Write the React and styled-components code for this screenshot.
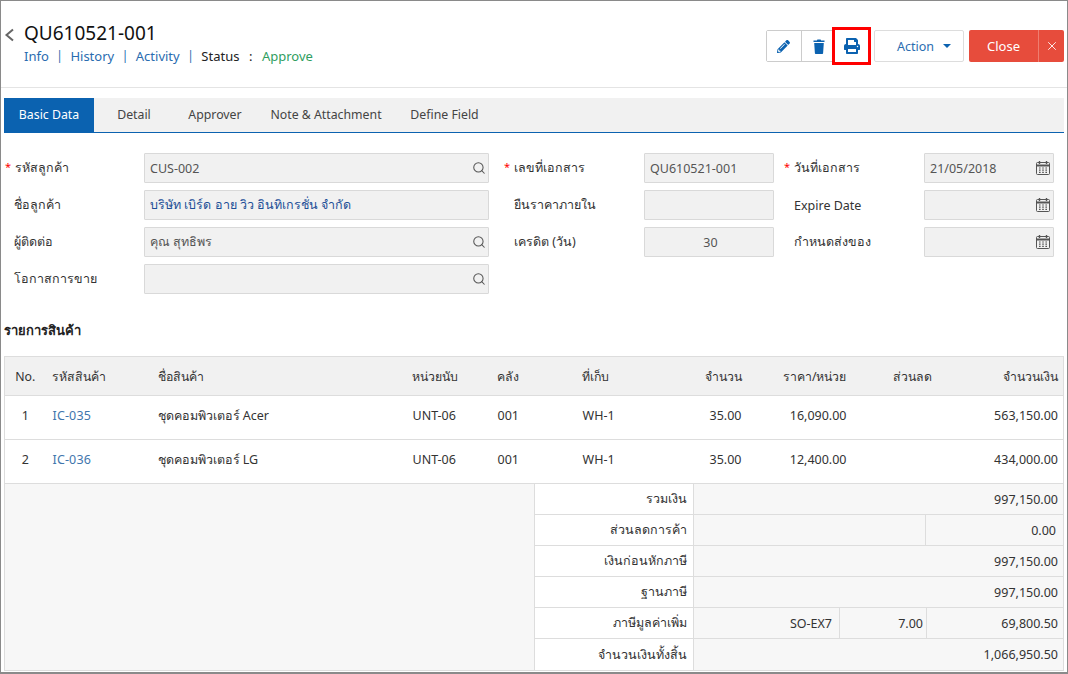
import React from "react";
import styled, { createGlobalStyle } from "styled-components";
import { FaPencilAlt, FaPrint } from "react-icons/fa";
import { Search, X } from "lucide-react";

const Global = createGlobalStyle`
  * { box-sizing: border-box; }
  html, body { margin: 0; padding: 0; background: #fff; }
  body { font-family: "Noto Sans", "Open Sans", "Liberation Sans", sans-serif; font-size: 12.5px; color: #333; }
`;

const Frame = styled.div`
  width: 1068px; height: 674px; border: 1px solid #8a8a8a; border-bottom-width: 2px; background: #fff; overflow: hidden;
  display: flex; flex-direction: column;
`;
const Header = styled.header`
  height: 87px; border-bottom: 1px solid #e4e4e4; display: flex; justify-content: space-between; padding: 21px 3px 0 2px;
`;
const TitleArea = styled.div`display: flex; align-items: flex-start;`;
const Back = styled.svg`margin: 6px 0 0 1px; width: 20px; height: 14px; flex: none;`;
const TitleText = styled.div`display: flex; flex-direction: column;`;
const Title = styled.h1`margin: 0; font-size: 19px; line-height: 23px; font-weight: 400; color: #111;`;
const SubNav = styled.nav`display: flex; align-items: center; font-size: 13px; line-height: 22px;`;
const NavLink = styled.a`color: #2a6cb0;`;
const Sep = styled.span`color: #2a6cb0; margin: 0 7.5px; font-size: 12px;`;
const Status = styled.span`color: #222;`;
const Colon = styled.span`color: #222; margin: 0 9.5px;`;
const Approve = styled.span`color: #2f9e5f;`;

const Toolbar = styled.div`display: flex; align-items: flex-start; margin-top: 8px;`;
const IconGroup = styled.div`display: flex; height: 32px; border: 1px solid #ccc; border-radius: 2px;`;
const IconButton = styled.button`
  width: 34px; height: 30px; padding: 0 ${p => p.$nudge ?? 0}px 0 0; background: #fff; border: 0; color: #0b62b0; font-size: 13px;
  display: flex; align-items: center; justify-content: center;
  border-left: ${p => (p.$first ? "0" : "1px solid #ccc")};
  ${p => p.$marked && "outline: 3px solid #f00; position: relative; height: 32px; margin-top: -1px; width: 33px; font-size: 16px;"}
`;
const ActionButton = styled.button`
  width: 90px; height: 32px; margin-left: 5px; background: #fff; border: 1px solid #ddd; border-radius: 2px; color: #2a6cb0;
  font: inherit; display: flex; align-items: center; justify-content: flex-end; padding: 0 12px 0 0; gap: 9px;
`;
const Caret = styled.span`width: 0; height: 0; border-left: 4.5px solid transparent; border-right: 4.5px solid transparent; border-top: 4.5px solid #0b62b0;`;
const CloseGroup = styled.div`display: flex; margin-left: 5px; height: 32px; border-radius: 2px; overflow: hidden;`;
const CloseButton = styled.button`
  width: 69px; border: 0; background: #e74c3c; color: #fff; font: inherit; font-size: 13px; padding: 0;
`;
const CloseX = styled.button`
  width: 26px; border: 0; border-left: 1px solid #ee7d70; background: #e74c3c; color: #fff; padding: 0;
  display: flex; align-items: center; justify-content: center;
`;

const Tabs = styled.div`
  margin: 10px 3px 0 3px; height: 35px; background: #f1f1f1; border-bottom: 1px solid #0b62b0; display: flex;
`;
const Tab = styled.div`
  width: ${p => p.$w}px; padding-bottom: 1px; display: flex; align-items: center; justify-content: center; font-size: 12.3px; color: ${p => (p.$active ? "#fff" : "#444")};
  background: ${p => (p.$active ? "#0b62b0" : "transparent")};
`;

const Form = styled.div`
  margin-top: 20px; display: grid; grid-template-columns: 140px 345px 155px 130px 150px 130px; grid-auto-rows: 30px; row-gap: 7px; padding-left: 3px; 
`;
const Label = styled.label`
  display: flex; align-items: center; padding-left: ${p => p.$pad ?? 10}px; color: #333; font-size: 12.5px; position: relative;
`;
const Req = styled.span`color: #f00; width: 10px; flex: none; font-size: 11px; margin-top: -3px;`;
const Input = styled.div`
  border: 1px solid #d9d9d9; background: #f1f1f1; display: flex; align-items: center; justify-content: ${p => (p.$center ? "center" : "space-between")};
  padding: 0 2px 0 5px; color: ${p => p.$color || "#555"}; font-size: 12.5px; border-radius: 1px;
`;
const Spacer = styled.div``;
const Section = styled.h2`margin: 27px 0 0 3px; font-size: 13px; line-height: 18px; font-weight: 700; color: #222;`;

const Table = styled.table`
  margin: 17px 0 0 3px; width: 1059px; border-collapse: collapse; table-layout: fixed; border: 1px solid #ddd; border-bottom: 0; font-size: 12.5px;
`;
const Th = styled.th`
  height: 39px; background: #f1f1f1; font-weight: 400; font-size: 12.3px; color: #333; padding: 0 ${p => p.$pr ?? 6}px 0 6px; border-bottom: 1px solid #ddd; text-align: ${p => p.$a || "left"};
`;
const Td = styled.td`
  height: 44px; padding: 0 ${p => p.$pr ?? 6}px 4px ${p => p.$pl ?? 7}px; border-bottom: 1px solid #ddd; color: #333; text-align: ${p => p.$a || "left"};
`;
const Code = styled.span`color: #3f76ad; letter-spacing: 0.15px;`;

const Footer = styled.div`
  margin-left: 3px; width: 1060px; display: grid; grid-template-columns: 530px 1fr; border: 1px solid #ddd; border-top: 0; height: 187px;
`;
const FooterBlank = styled.div`background: #f7f7f7; border-right: 1px solid #ddd;`;
const Totals = styled.div`display: grid; grid-auto-rows: 31px;`;
const TotalRow = styled.div`display: grid; grid-template-columns: 159px 1fr; border-bottom: 1px solid #ddd; &:last-child { border-bottom: 0; }`;
const TotalLabel = styled.div`display: flex; align-items: center; justify-content: flex-end; padding-right: 6px; border-right: 1px solid #ddd; background: #fff;`;
const TotalValues = styled.div`display: flex; background: #f7f7f7;`;
const TotalCell = styled.div`
  ${p => (p.$w ? `width: ${p.$w}px;` : "flex: 1;")}
  display: flex; align-items: center; justify-content: flex-end; padding-right: ${p => p.$pr ?? 5}px;
  & + & { border-left: 1px solid #ddd; }
`;

const CalendarIcon = () => (
  <svg width="16" height="16" viewBox="0 0 16 16" fill="none" stroke="#555" strokeWidth="1">
    <rect x="1.5" y="2.5" width="13" height="12" rx="1" />
    <path d="M1.5 5.5h13" strokeWidth="2" />
    <path d="M4.5 1v3M11.5 1v3" strokeWidth="1.4" />
    <path d="M4 8h1.6M7.2 8h1.6M10.4 8h1.6M4 10.2h1.6M7.2 10.2h1.6M10.4 10.2h1.6M4 12.4h1.6M7.2 12.4h1.6M10.4 12.4h1.6" strokeWidth="1.2" />
  </svg>
);
const SearchIcon = () => <Search size={14} color="#555" strokeWidth={1.8} />;
const TrashIcon = () => (
  <svg width="12" height="15" viewBox="0 0 12 15" fill="currentColor">
    <path d="M1.2 4h9.6l-.7 10.2a.8.8 0 0 1-.8.8H2.7a.8.8 0 0 1-.8-.8z" />
    <path d="M.5 1.6h3.4l.5-1h3.2l.5 1h3.4v1.5H.5z" />
  </svg>
);

const rows = [
  ["1", "IC-035", "ชุดคอมพิวเตอร์ Acer", "16,090.00", "563,150.00"],
  ["2", "IC-036", "ชุดคอมพิวเตอร์ LG", "12,400.00", "434,000.00"],
];
const widths = [41, 106, 254, 85, 85, 84, 88, 105, 113, 98];

export default function App() {
  return (
    <Frame>
      <Global />
      <Header>
        <TitleArea>
          <Back viewBox="0 0 20 14"><path d="M9 1.5 L2.5 7 L9 12.5" fill="none" stroke="#666" strokeWidth="2" /></Back>
          <TitleText>
            <Title>QU610521-001</Title>
            <SubNav>
              <NavLink>Info</NavLink><Sep>|</Sep>
              <NavLink>History</NavLink><Sep>|</Sep>
              <NavLink>Activity</NavLink><Sep>|</Sep>
              <Status>Status</Status><Colon>:</Colon>
              <Approve>Approve</Approve>
            </SubNav>
          </TitleText>
        </TitleArea>
        <Toolbar>
          <IconGroup>
            <IconButton $first $nudge={2}><FaPencilAlt /></IconButton>
            <IconButton><TrashIcon /></IconButton>
            <IconButton $marked $first><FaPrint /></IconButton>
          </IconGroup>
          <ActionButton>Action <Caret /></ActionButton>
          <CloseGroup>
            <CloseButton>Close</CloseButton>
            <CloseX><X size={14} strokeWidth={1.5} /></CloseX>
          </CloseGroup>
        </Toolbar>
      </Header>
      <Tabs>
        <Tab $active $w={90}>Basic Data</Tab>
        <Tab $w={80}>Detail</Tab>
        <Tab $w={82}>Approver</Tab>
        <Tab $w={140}>Note &amp; Attachment</Tab>
        <Tab $w={97}>Define Field</Tab>
      </Tabs>
      <Form>
        <Label $pad={1}><Req>*</Req>รหัสลูกค้า</Label>
        <Input>CUS-002<SearchIcon /></Input>
        <Label $pad={15}><Req>*</Req>เลขที่เอกสาร</Label>
        <Input>QU610521-001</Input>
        <Label $pad={10}><Req>*</Req>วันที่เอกสาร</Label>
        <Input>21/05/2018<CalendarIcon /></Input>

        <Label>ชื่อลูกค้า</Label>
        <Input $color="#1d4f97">บริษัท เบิร์ด อาย วิว อินทิเกรชั่น จำกัด</Input>
        <Label $pad={25}>ยืนราคาภายใน</Label>
        <Input />
        <Label $pad={20}>Expire Date</Label>
        <Input><span /><CalendarIcon /></Input>

        <Label>ผู้ติดต่อ</Label>
        <Input>คุณ สุทธิพร<SearchIcon /></Input>
        <Label $pad={25}>เครดิต (วัน)</Label>
        <Input $center>30</Input>
        <Label $pad={20}>กำหนดส่งของ</Label>
        <Input><span /><CalendarIcon /></Input>

        <Label>โอกาสการขาย</Label>
        <Input><span /><SearchIcon /></Input>
        <Spacer />
      </Form>
      <Section>รายการสินค้า</Section>
      <Table>
        <colgroup>{widths.map((w, i) => <col key={i} style={{ width: w }} />)}</colgroup>
        <thead>
          <tr>
            <Th $a="center">No.</Th>
            <Th>รหัสสินค้า</Th>
            <Th>ชื่อสินค้า</Th>
            <Th>หน่วยนับ</Th>
            <Th>คลัง</Th>
            <Th>ที่เก็บ</Th>
            <Th $a="right">จำนวน</Th>
            <Th $a="right">ราคา/หน่วย</Th>
            <Th $a="right" $pr={34}>ส่วนลด</Th>
            <Th $a="right" $pr={5}>จำนวนเงิน</Th>
          </tr>
        </thead>
        <tbody>
          {rows.map(r => (
            <tr key={r[0]}>
              <Td $a="center" $pl={6}>{r[0]}</Td>
              <Td><Code>{r[1]}</Code></Td>
              <Td $pl={6}>{r[2]}</Td>
              <Td>UNT-06</Td>
              <Td>001</Td>
              <Td>WH-1</Td>
              <Td $a="right">35.00</Td>
              <Td $a="right">{r[3]}</Td>
              <Td />
              <Td $a="right" $pr={5}>{r[4]}</Td>
            </tr>
          ))}
        </tbody>
      </Table>
      <Footer>
        <FooterBlank />
        <Totals>
          <TotalRow><TotalLabel>รวมเงิน</TotalLabel><TotalValues><TotalCell>997,150.00</TotalCell></TotalValues></TotalRow>
          <TotalRow><TotalLabel>ส่วนลดการค้า</TotalLabel><TotalValues><TotalCell /><TotalCell $w={138} $pr={7}>0.00</TotalCell></TotalValues></TotalRow>
          <TotalRow><TotalLabel>เงินก่อนหักภาษี</TotalLabel><TotalValues><TotalCell>997,150.00</TotalCell></TotalValues></TotalRow>
          <TotalRow><TotalLabel>ฐานภาษี</TotalLabel><TotalValues><TotalCell>997,150.00</TotalCell></TotalValues></TotalRow>
          <TotalRow><TotalLabel>ภาษีมูลค่าเพิ่ม</TotalLabel><TotalValues><TotalCell $pr={7}>SO-EX7</TotalCell><TotalCell $w={87} $pr={3}>7.00</TotalCell><TotalCell $w={137}>69,800.50</TotalCell></TotalValues></TotalRow>
          <TotalRow><TotalLabel>จำนวนเงินทั้งสิ้น</TotalLabel><TotalValues><TotalCell>1,066,950.50</TotalCell></TotalValues></TotalRow>
        </Totals>
      </Footer>
    </Frame>
  );
}
